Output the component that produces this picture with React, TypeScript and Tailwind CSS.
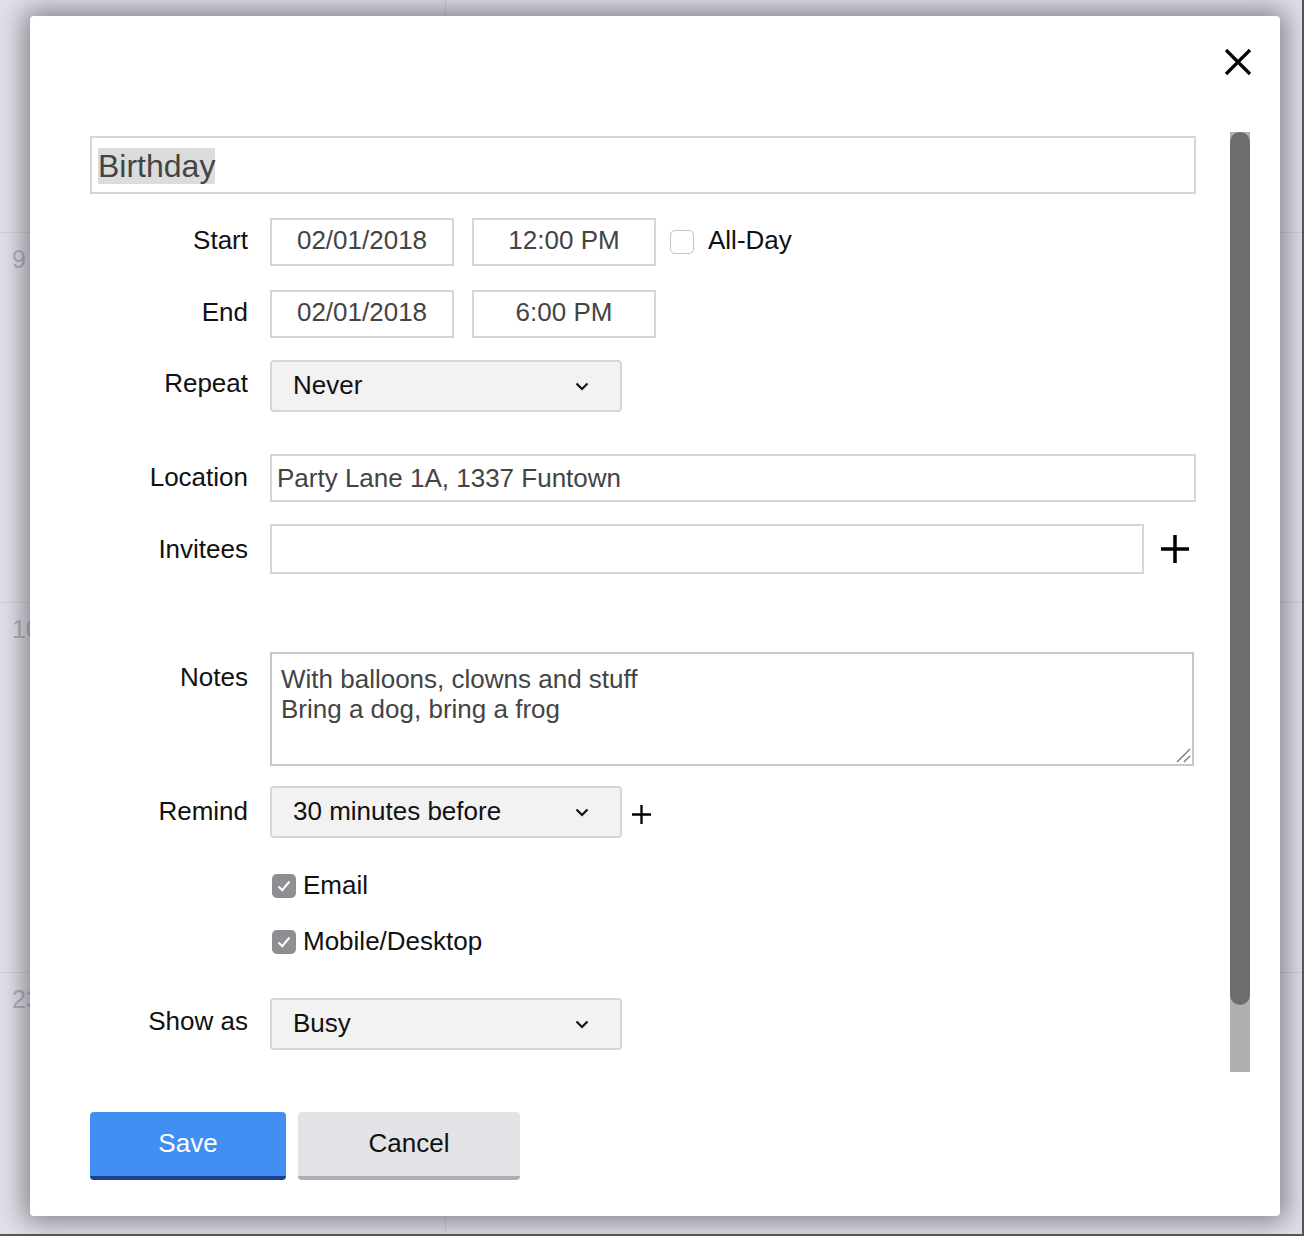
import React from "react";

const hours = ["9", "10", "23"];

const Chevron = () => (
  <svg width="14" height="9" viewBox="0 0 14 9" fill="none">
    <path d="M1.5 1.5 L7 7 L12.5 1.5" stroke="#111" strokeWidth="2.2" />
  </svg>
);

const Plus = ({ size, stroke }: { size: number; stroke: number }) => (
  <svg width={size} height={size} viewBox={`0 0 ${size} ${size}`} fill="none">
    <path d={`M${size / 2} 0 V${size} M0 ${size / 2} H${size}`} stroke="#000" strokeWidth={stroke} />
  </svg>
);

const Checked = () => (
  <span className="flex h-[24px] w-[24px] items-center justify-center rounded-[5px] bg-[#8e8e93]">
    <svg width="24" height="24" viewBox="0 0 24 24" fill="none">
      <path d="M6.5 12.5 L10.2 16.2 L17.5 7.5" stroke="#fff" strokeWidth="2" />
    </svg>
  </span>
);

const Label = ({ children, className = "" }: { children: React.ReactNode; className?: string }) => (
  <div className={"w-[158px] shrink-0 text-right text-[26px] leading-[30px] text-[#111] " + className}>{children}</div>
);

const Select = ({ value }: { value: string }) => (
  <div className="flex h-[52px] w-[352px] items-center justify-between rounded-[4px] border-2 border-[#d6d6d6] bg-[#f2f2f2] pl-[21px] pr-[31px] text-[26px] text-[#111]">
    <span className="-mt-[2px]">{value}</span>
    <Chevron />
  </div>
);

const Box = ({ value, className = "" }: { value: string; className?: string }) => (
  <div className={"flex h-[48px] items-center border-2 border-[#d6d6d6] text-[26px] text-[#444] " + className}>{value}</div>
);

export default function App() {
  return (
    <div className="relative h-[1236px] w-[1304px] overflow-hidden border-b-2 border-r-2 border-[#555] bg-[#e2e0e8] font-['Liberation_Sans',Arial,sans-serif]">
      {/* calendar behind the dialog */}
      <div className="flex h-full">
        <div className="flex w-[446px] flex-col border-r border-[#d2d0d8]">
          <div className="h-[232px] shrink-0" />
          {hours.map((h) => (
            <div key={h} className="h-[370px] shrink-0 border-t border-[#d2d0d8] pl-[12px] pt-[8px] text-[25px] text-[#b3b1b9]">
              {h}
            </div>
          ))}
        </div>
        <div className="flex flex-1 flex-col">
          <div className="h-[232px] shrink-0" />
          {hours.map((h) => (
            <div key={h} className="h-[370px] shrink-0 border-t border-[#d2d0d8]" />
          ))}
        </div>
      </div>

      {/* Dialog */}
      <div className="absolute left-[30px] top-[16px] flex h-[1200px] w-[1250px] flex-col rounded-[4px] bg-white shadow-[0_0_26px_6px_rgba(40,38,50,0.5)]">
        <div className="flex h-[116px] shrink-0 justify-end pr-[28px] pt-[32px]">
          <button className="h-[28px] w-[28px]">
            <svg width="28" height="28" viewBox="0 0 28 28" fill="none">
              <path d="M2 2 L26 26 M26 2 L2 26" stroke="#000" strokeWidth="3.2" />
            </svg>
          </button>
        </div>

        <div className="flex h-[940px] shrink-0 pl-[60px]">
          <div className="flex w-[1106px] flex-col">
            <div className="mt-[4px] flex h-[58px] items-center border-2 border-[#d6d6d6] pl-[6px] text-[32px] text-[#444]">
              <span className="mt-[2px] bg-[#dcdcdc] leading-[36px]">Birthday</span>
            </div>

            <div className="mt-[24px] flex items-center">
              <Label className="-mt-[4px]">Start</Label>
              <div className="ml-[22px] flex items-center">
                <Box value="02/01/2018" className="w-[184px] justify-center pb-[3px]" />
                <Box value="12:00 PM" className="ml-[18px] w-[184px] justify-center pb-[3px]" />
                <span className="ml-[14px] h-[24px] w-[24px] rounded-[5px] border-[1.5px] border-[#c4c4c4] bg-white" />
                <span className="-mt-[4px] ml-[14px] text-[26px] text-[#111]">All-Day</span>
              </div>
            </div>

            <div className="mt-[24px] flex items-center">
              <Label className="-mt-[4px]">End</Label>
              <div className="ml-[22px] flex items-center">
                <Box value="02/01/2018" className="w-[184px] justify-center pb-[3px]" />
                <Box value="6:00 PM" className="ml-[18px] w-[184px] justify-center pb-[3px]" />
              </div>
            </div>

            <div className="mt-[22px] flex items-center">
              <Label className="-mt-[6px]">Repeat</Label>
              <div className="ml-[22px]">
                <Select value="Never" />
              </div>
            </div>

            <div className="mt-[42px] flex items-center">
              <Label className="-mt-[2px]">Location</Label>
              <Box value="Party Lane 1A, 1337 Funtown" className="ml-[22px] flex-1 pl-[5px] pt-[1px]" />
            </div>

            <div className="mt-[22px] flex items-center">
              <Label>Invitees</Label>
              <div className="ml-[22px] h-[50px] w-[874px] border-2 border-[#d6d6d6]" />
              <span className="ml-[17px] flex">
                <Plus size={28} stroke={3.5} />
              </span>
            </div>

            <div className="mt-[78px] flex items-start">
              <Label className="pt-[10px]">Notes</Label>
              <div className="relative ml-[22px] h-[114px] w-[924px] border-2 border-[#c8c8c8] pl-[9px] pt-[10px] text-[26px] leading-[30px] text-[#444]">
                <div>With balloons, clowns and stuff</div>
                <div>Bring a dog, bring a frog</div>
                <svg className="absolute bottom-[1px] right-[1px]" width="16" height="16" viewBox="0 0 16 16" fill="none">
                  <path d="M2 15 L15 2 M9 15 L15 9" stroke="#777" strokeWidth="1.4" />
                </svg>
              </div>
            </div>

            <div className="mt-[20px] flex items-center">
              <Label className="-mt-[2px]">Remind</Label>
              <div className="ml-[22px]">
                <Select value="30 minutes before" />
              </div>
              <span className="ml-[10px] mt-[4px] flex">
                <Plus size={19} stroke={2.3} />
              </span>
            </div>

            <div className="ml-[182px] mt-[36px] flex items-center">
              <Checked />
              <span className="-mt-[2px] ml-[7px] text-[26px] leading-[24px] text-[#111]">Email</span>
            </div>

            <div className="ml-[182px] mt-[32px] flex items-center">
              <Checked />
              <span className="-mt-[2px] ml-[7px] text-[26px] leading-[24px] text-[#111]">Mobile/Desktop</span>
            </div>

            <div className="mt-[44px] flex items-center">
              <Label className="-mt-[6px]">Show as</Label>
              <div className="ml-[22px]">
                <Select value="Busy" />
              </div>
            </div>
          </div>

          {/* scrollbar */}
          <div className="ml-[34px] flex h-[940px] w-[20px] flex-col bg-[#b0b0b0]">
            <div className="h-[873px] w-[20px] rounded-[10px] bg-[#6d6d6d]" />
          </div>
        </div>

        <div className="mt-[40px] flex pl-[60px]">
          <button className="flex h-[68px] w-[196px] items-center justify-center rounded-[4px] border-b-4 border-[#1c3f91] bg-[#428ff4] pb-[2px] text-[26px] text-white">
            Save
          </button>
          <button className="ml-[12px] flex h-[68px] w-[222px] items-center justify-center rounded-[4px] border-b-4 border-[#afaeb5] bg-[#e3e2e7] pb-[2px] text-[26px] text-[#111]">
            Cancel
          </button>
        </div>
      </div>
    </div>
  );
}
